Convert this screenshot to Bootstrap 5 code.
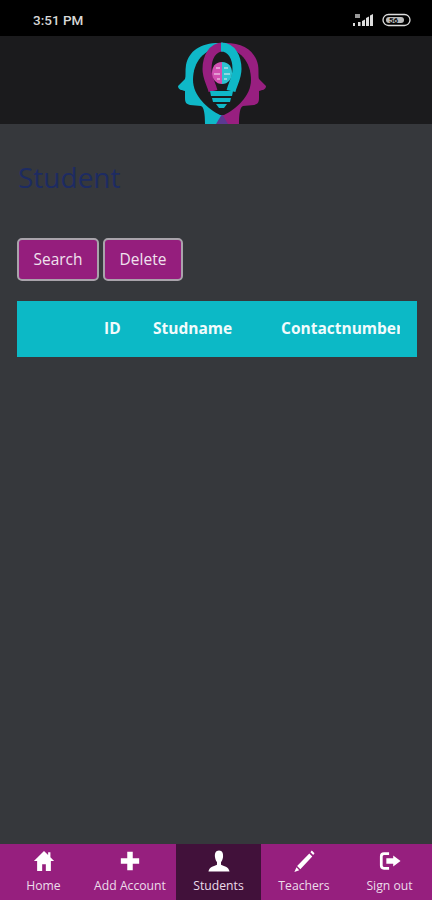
<!DOCTYPE html>
<html lang="en">
<head>
  <meta charset="UTF-8">
  <meta name="viewport" content="width=device-width, initial-scale=1">
  <title>Student</title>
  <link href="https://cdn.jsdelivr.net/npm/bootstrap@5.3.3/dist/css/bootstrap.min.css" rel="stylesheet">
  <style>
    body {
      background-color: #36383c;
      font-family: "Open Sans", sans-serif;
      width: 432px;
      height: 900px;
      overflow: hidden;
    }

    .app-shell { height: 900px; }

    .status-strip {
      height: 36px;
      background: #000;
      padding: 4px 21px 0 33px;
      font-family: Roboto, sans-serif;
      font-weight: 500;
      font-size: 13.5px;
      color: #d8d8d8;
    }

    .logo-strip {
      height: 88px;
      background: #1b1b1d;
    }

    .logo-mark { margin-left: 12px; }

    .page-body { padding: 0 15px 0 17px; }

    .page-title {
      margin: 34px 0 42px 1px;
      font-size: 28px;
      line-height: 38px;
      font-weight: 400;
      color: #1d2b62;
    }

    .act-btn {
      height: 43px;
      background: #951e7d;
      border: 2px solid #a9a3ab;
      border-radius: 5px;
      color: #f0e2ee;
      font-size: 15.5px;
      padding: 0;
    }

    .act-search { width: 82px; }
    .act-delete { width: 80px; }

    .head-wrap {
      margin-top: 20px;
      height: 56px;
      background: #0cb9c6;
      padding-right: 17px;
    }

    .head-clip { overflow: hidden; height: 56px; }

    .head-table { width: 480px; table-layout: fixed; }

    .head-table th {
      background: transparent;
      border: 0;
      padding: 0;
      height: 56px;
      vertical-align: middle;
      color: #f2fbfc;
      font-size: 15.5px;
      font-weight: 700;
    }

    .col-blank { width: 87px; }
    .col-id { width: 49px; }
    .col-name { width: 128px; }

    .tab-bar {
      height: 56px;
      background: #961f7e;
    }

    .tab-item {
      color: #ecdcea;
      font-size: 12.2px;
      line-height: 14px;
      padding-top: 6px;
      text-decoration: none;
    }

    .tab-item:nth-child(1) { width: 87px; }
    .tab-item:nth-child(2) { width: 89px; padding-right: 3px; }
    .tab-item:nth-child(3) { width: 85px; }
    .tab-item:nth-child(4) { width: 86px; }
    .tab-item:nth-child(5) { width: 85px; }

    .tab-item.tab-on { background: #41113a; }

    .tab-item svg { width: 24px; height: 22px; fill: #fff; margin-bottom: 7px; }
  </style>
</head>
<body>

<div class="app-shell d-flex flex-column">
  <div class="status-strip d-flex align-items-center justify-content-between">
    <span>3:51 PM</span>
    <svg width="58" height="14" viewBox="0 0 58 14">
      <rect x="0" y="10" width="2" height="3" fill="#ddd"/>
      <rect x="2" y="1" width="5" height="4" fill="#999"/>
      <rect x="5" y="9" width="2.5" height="4" fill="#ddd"/>
      <path d="M9 13V8l3-1.500V13zM13 13V5l3-1.500V13zM17 13V2.500l3-1.500V13z" fill="#ddd"/>
      <rect x="30" y="1.500" width="27" height="11" rx="5.500" fill="none" stroke="#ddd" stroke-width="1.300"/>
      <rect x="33" y="4" width="18" height="6" rx="3" fill="#bbb"/>
      <text x="36" y="10" font-size="8" font-weight="700" fill="#111">56</text>
    </svg>
  </div>

  <div class="logo-strip d-flex justify-content-center">
    <svg class="logo-mark" width="120" height="88" viewBox="0 0 120 88">
      <path d="M60 7C40 6 27 14 24 29C23 35 24 40 23 43L16 50C16 54 20 54 23 55V62C23 66 24 68 28 69L39 70C42 71 43 78 43 88H60Z" fill="#0fb8c8"/>
      <path d="M60 7C80 6 93 14 96 29C97 35 96 40 97 43L104 50C104 54 100 54 97 55V62C97 66 96 68 92 69L81 70C78 71 77 78 77 88H60Z" fill="#981f80"/>
      <path d="M60 78L54 88H60H66Z" fill="#5b3a92"/>
      <path d="M60 12C42 12 31 26 31 44C31 60 46 73 58 79H62C74 73 89 60 89 44C89 26 78 12 60 12Z" fill="#1b1b1d"/>
      <path d="M61 11C50 11 45 22 45 33C45 42 49 47 51 55" fill="none" stroke="#981f80" stroke-width="9"/>
      <path d="M59 11C70 11 75 22 75 33C75 42 71 47 69 55" fill="none" stroke="#0fb8c8" stroke-width="9"/>
      <path d="M60 26C53 26 50 31 50 37C50 43 54 48 60 48Z" fill="#d14fb0"/>
      <path d="M60 26C67 26 70 31 70 37C70 43 66 48 60 48Z" fill="#2cc3d0"/>
      <path d="M54 32h4M52 38h6M55 43h3M62 32h4M62 38h6M62 43h3" stroke="#f4e8f4" stroke-width="1" fill="none"/>
      <path d="M48 55H71L70 60H49ZM50 62H69L68 66H51ZM54 68H65L62 72H57Z" fill="#0fb8c8"/>
    </svg>
  </div>

  <div class="page-body flex-grow-1">
    <h2 class="page-title">Student</h2>
    <div class="d-flex gap-1">
      <button class="btn act-btn act-search" type="button">Search</button>
      <button class="btn act-btn act-delete" type="button">Delete</button>
    </div>
    <div class="head-wrap">
      <div class="head-clip">
        <table class="table head-table mb-0">
          <thead>
            <tr>
              <th class="col-blank"></th>
              <th class="col-id">ID</th>
              <th class="col-name">Studname</th>
              <th>Contactnumber</th>
            </tr>
          </thead>
        </table>
      </div>
    </div>
  </div>

  <nav class="tab-bar d-flex">
    <a class="tab-item d-flex flex-column align-items-center" href="#">
      <svg viewBox="0 0 26 24"><path d="M13 1L2 12H5.500V23H11V15.500H15V23H20.500V12H24L20 8V2.500H17.500V5.500Z"/></svg>
      Home
    </a>
    <a class="tab-item d-flex flex-column align-items-center" href="#">
      <svg viewBox="0 0 26 24"><path d="M10 2H16V9H23V15H16V22H10V15H3V9H10Z"/></svg>
      Add Account
    </a>
    <a class="tab-item tab-on d-flex flex-column align-items-center" href="#">
      <svg viewBox="0 0 26 24"><path d="M13 0.500C9.500 0.500 8.200 3.500 8.600 7.500C8.900 10 9.800 12 10.800 13V16C8 17.500 2.500 18 1.500 23.500H24.500C23.500 18 18 17.500 15.200 16V13C16.200 12 17.100 10 17.400 7.500C17.800 3.500 16.500 0.500 13 0.500Z"/></svg>
      Students
    </a>
    <a class="tab-item d-flex flex-column align-items-center" href="#">
      <svg viewBox="0 0 26 24"><path d="M21.500 0.500L24.500 3.500L23 5.500L20 2.500ZM18.800 3.800L22 7L9 21L5.500 17.500ZM4.800 18.800L7.800 22L2.500 24Z"/></svg>
      Teachers
    </a>
    <a class="tab-item d-flex flex-column align-items-center" href="#">
      <svg viewBox="0 0 26 24"><path d="M12 2.500H6.500C3.500 2.500 2 4 2 7V17C2 20 3.500 21.500 6.500 21.500H12V18.500H7C5.800 18.500 5 17.800 5 16.500V7.500C5 6.200 5.800 5.500 7 5.500H12Z"/><path d="M16.500 6L24.500 12L16.500 18V15H9V9H16.500Z"/></svg>
      Sign out
    </a>
  </nav>
</div>

<script src="https://cdn.jsdelivr.net/npm/bootstrap@5.3.3/dist/js/bootstrap.bundle.min.js"></script>
</body>
</html>
